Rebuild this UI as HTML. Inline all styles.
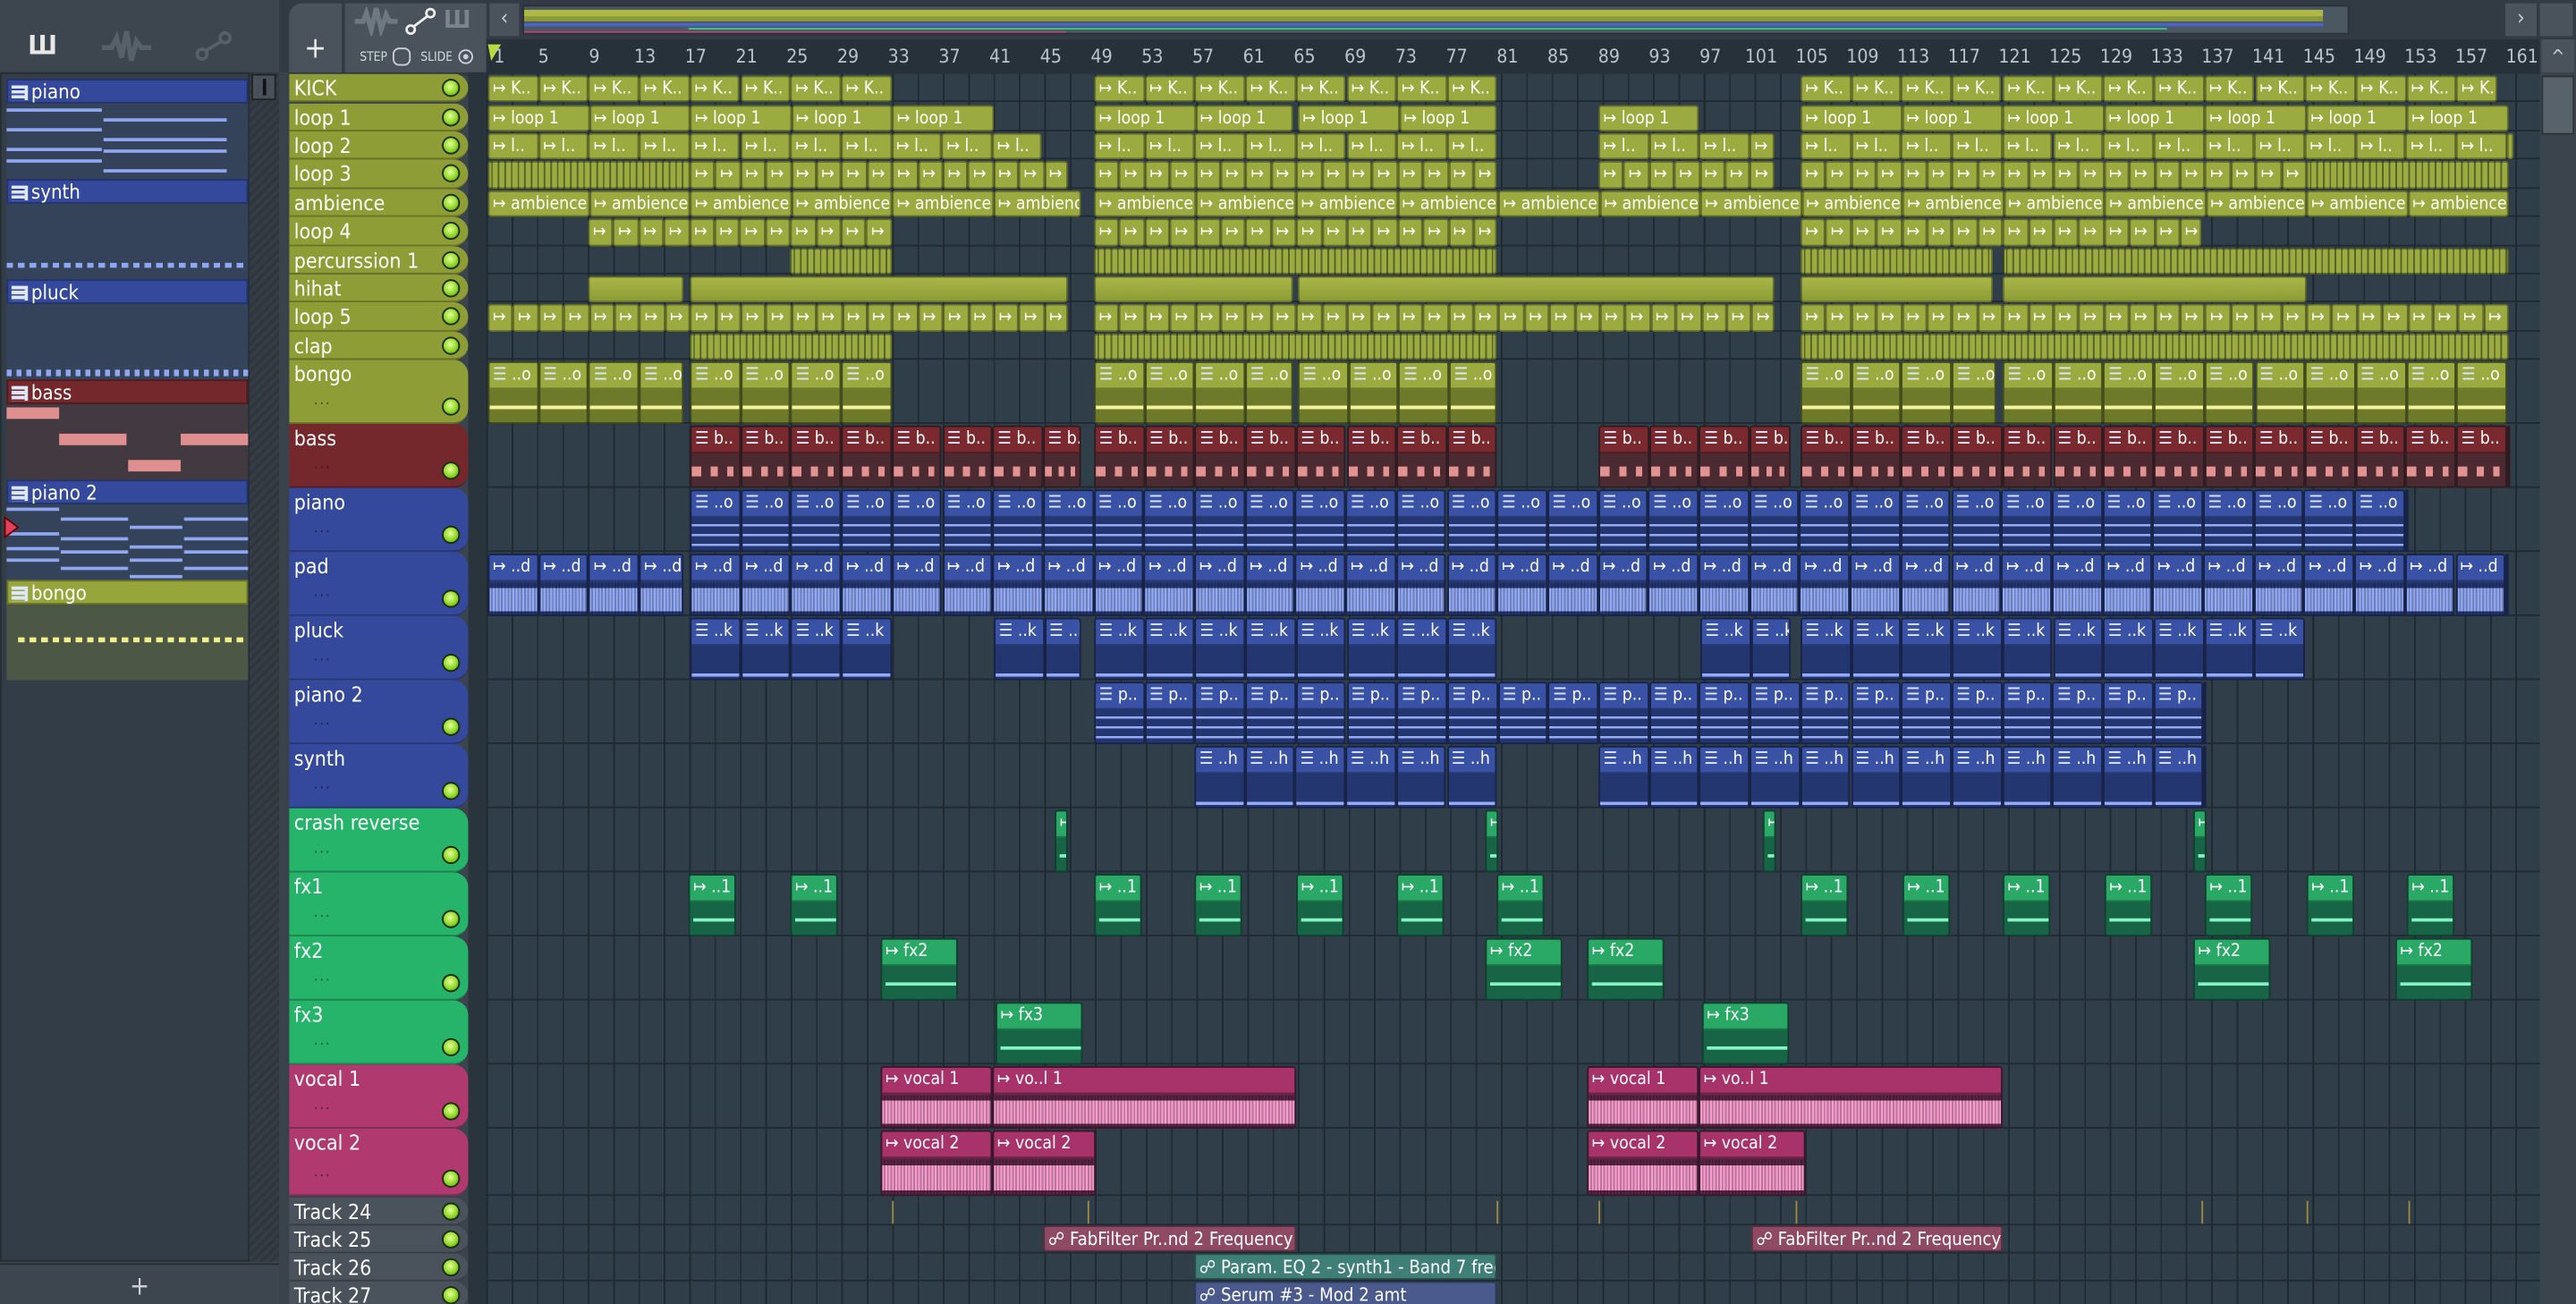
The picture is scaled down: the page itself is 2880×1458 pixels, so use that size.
<!DOCTYPE html>
<html><head><meta charset="utf-8">
<style>
*{margin:0;padding:0;box-sizing:border-box}
html,body{width:2880px;height:1458px;overflow:hidden;background:#333c45}
#s{position:absolute;left:0;top:0;width:1568px;height:794px;transform:scale(1.836735);transform-origin:0 0;font-family:"DejaVu Sans Condensed","Liberation Sans Narrow","Liberation Sans",sans-serif;color:#fff;overflow:hidden;background:#3b434c}
.a{position:absolute}
.clip{position:absolute;border:1px solid rgba(0,0,0,.35);border-radius:2px;overflow:hidden;font-size:10.5px;line-height:15px;white-space:nowrap;padding-left:2px}
.th{position:absolute;left:176px;width:109px;border-radius:0 9px 9px 0;font-size:12.5px;padding-left:3px;line-height:17px;border-bottom:1px solid rgba(0,0,0,.25)}
.led{position:absolute;right:5px;width:11px;height:11px;border-radius:50%;background:radial-gradient(circle at 45% 40%,#e8ff9a,#8fd829 55%,#4f8a10);border:1px solid #1d2a12}
.dots{position:absolute;left:15px;bottom:4px;font-size:9px;letter-spacing:1px;opacity:.5;color:#000}
.num{position:absolute;top:27px;font-size:11.5px;color:#b9c3cc;transform:translateX(-50%)}
.pat{position:absolute;left:4px;width:147px}
.ph{height:15px;font-size:12px;line-height:14px;padding-left:14px;position:relative;border:1px solid rgba(0,0,0,.3)}
.ph:before{content:"";position:absolute;left:2px;top:3px;width:8px;height:9px;background:repeating-linear-gradient(#dfe6ff 0 2px,transparent 2px 3px);border-right:2px solid #dfe6ff}
.n{position:absolute;height:2px;background:#8fa6f0}
</style></head><body><div id="s">
<div class="a" style="left:0;top:0;width:170px;height:44px;background:#3d454e"></div>
<div class="a" style="left:17px;top:18px;font-size:16px;color:#e8e8e8;font-weight:bold">Ш</div>
<svg class="a" style="left:60px;top:18px" width="36" height="22"><path d="M2 11h6l3-6 3 12 3-16 3 18 3-12 3 4h6" stroke="#556068" stroke-width="3" fill="none"/></svg>
<svg class="a" style="left:118px;top:18px" width="24" height="20"><circle cx="5" cy="15" r="3" fill="none" stroke="#556068" stroke-width="2"/><circle cx="19" cy="5" r="3" fill="none" stroke="#556068" stroke-width="2"/><path d="M7 13L17 7" stroke="#556068" stroke-width="2"/></svg>
<div class="a" style="left:0;top:44px;width:152px;height:724px;background:#333d47;border:1px solid #262e35"></div>
<div class="a" style="left:152px;top:44px;width:18px;height:724px;background:repeating-linear-gradient(135deg,#2f363d 0 2px,#363e45 2px 4px)"></div>
<div class="a" style="left:153px;top:45px;width:15px;height:16px;background:#48515a;border:1px solid #222"><div style="margin:2px auto;width:2px;height:10px;background:#111"></div></div>
<div class="a" style="left:0;top:769px;width:170px;height:25px;background:#3d454e;border-top:1px solid #262e35;text-align:center;font-size:16px;color:#ccd;line-height:26px">+</div>

<div class="pat" style="top:48px"><div class="ph" style="background:#34499b">piano</div><div style="height:46px;background:#34435a;position:relative">
<div class="n" style="left:0;width:58px;top:3px"></div><div class="n" style="left:0;width:58px;top:15px"></div><div class="n" style="left:0;width:58px;top:27px"></div><div class="n" style="left:0;width:58px;top:34px"></div>
<div class="n" style="left:59px;width:75px;top:9px"></div><div class="n" style="left:59px;width:75px;top:21px"></div><div class="n" style="left:59px;width:75px;top:28px"></div><div class="n" style="left:59px;width:75px;top:40px"></div>
<div class="n" style="left:0;width:0"></div></div></div>
<div class="a" style="left:4px;top:64px;width:147px;height:46px;overflow:hidden;pointer-events:none">
<div class="n" style="left:59px;width:57px;top:15px;background:#34435a"></div>
</div>
<div class="pat" style="top:109px"><div class="ph" style="background:#34499b">synth</div><div style="height:46px;background:#34435a;background-image:repeating-linear-gradient(90deg,#8fa6f0 0 4px,transparent 4px 7px);background-size:147px 3px;background-repeat:no-repeat;background-position:0 36px"></div></div>
<div class="pat" style="top:170px"><div class="ph" style="background:#34499b">pluck</div><div style="height:46px;background:#34435a;background-image:repeating-linear-gradient(90deg,#8fa6f0 0 3px,transparent 3px 6px);background-size:147px 4px;background-repeat:no-repeat;background-position:0 40px"></div></div>
<div class="pat" style="top:231px"><div class="ph" style="background:#74282c">bass</div><div style="height:46px;background:#433a41;background-image:linear-gradient(#df8f8f,#df8f8f),linear-gradient(#df8f8f,#df8f8f),linear-gradient(#df8f8f,#df8f8f),linear-gradient(#df8f8f,#df8f8f);background-size:32px 7px,41px 7px,41px 7px,32px 7px;background-repeat:no-repeat;background-position:0 2px,32px 18px,106px 18px,74px 34px"></div></div>
<div class="pat" style="top:292px"><div class="ph" style="background:#34499b">piano 2</div><div style="height:46px;background:#34435a;position:relative">
<div class="n" style="left:0;width:32px;top:2px"></div><div class="n" style="left:0;width:32px;top:17px"></div><div class="n" style="left:0;width:32px;top:26px"></div><div class="n" style="left:0;width:32px;top:33px"></div>
<div class="n" style="left:33px;width:41px;top:8px"></div><div class="n" style="left:33px;width:41px;top:20px"></div><div class="n" style="left:33px;width:41px;top:28px"></div><div class="n" style="left:33px;width:41px;top:38px"></div>
<div class="n" style="left:75px;width:32px;top:13px"></div><div class="n" style="left:75px;width:32px;top:25px"></div><div class="n" style="left:75px;width:32px;top:33px"></div><div class="n" style="left:75px;width:32px;top:43px"></div>
<div class="n" style="left:108px;width:39px;top:8px"></div><div class="n" style="left:108px;width:39px;top:20px"></div><div class="n" style="left:108px;width:39px;top:28px"></div><div class="n" style="left:108px;width:39px;top:38px"></div>
</div></div>
<svg class="a" style="left:2px;top:314px" width="10" height="14"><path d="M1 1L9 7L1 13Z" fill="#e0405a" stroke="#600" stroke-width="1"/></svg>
<div class="pat" style="top:353px"><div class="ph" style="background:#97a63a">bongo</div><div style="height:46px;background:#4d5746;background-image:repeating-linear-gradient(90deg,#f2f08a 0 4px,transparent 4px 7px);background-size:140px 3px;background-repeat:no-repeat;background-position:7px 20px"></div></div>

<div class="a" style="left:170px;top:0;width:1398px;height:46px;background:#323b44"></div>
<div class="a" style="left:176px;top:2px;width:32px;height:42px;background:#4a535c;border-radius:8px 0 0 0"><div style="text-align:center;font-size:18px;margin-top:17px;color:#eee">+</div></div>
<div class="a" style="left:210px;top:2px;width:86px;height:42px;background:#4a535c"></div>
<svg class="a" style="left:214px;top:4px" width="30" height="18"><path d="M2 9h5l2-5 3 10 3-13 3 13 3-9 2 4h5" stroke="#6e7880" stroke-width="3" fill="none"/></svg>
<svg class="a" style="left:246px;top:4px" width="20" height="18"><circle cx="4" cy="14" r="2.5" fill="none" stroke="#eee" stroke-width="1.5"/><circle cx="16" cy="4" r="2.5" fill="none" stroke="#eee" stroke-width="1.5"/><path d="M6 12L14 6" stroke="#eee" stroke-width="1.5"/></svg>
<div class="a" style="left:270px;top:3px;font-size:15px;font-weight:bold;color:#7a848c">Ш</div>
<div class="a" style="left:219px;top:30px;font-size:7.5px;color:#cdd">STEP</div>
<div class="a" style="left:239px;top:29px;width:11px;height:11px;border:1px solid #ccd;border-radius:4px"></div>
<div class="a" style="left:256px;top:30px;font-size:7.5px;color:#cdd">SLIDE</div>
<div class="a" style="left:279px;top:30px;width:9px;height:9px;border:1px solid #ccd;border-radius:50%;background:radial-gradient(#ccd 30%,transparent 35%)"></div>
<div class="a" style="left:298px;top:2px;width:18px;height:20px;background:#4a535c;color:#ccd;font-size:13px;text-align:center;line-height:20px">‹</div>
<div class="a" style="left:318px;top:3px;width:1112px;height:18px;background:#4b5761;border:1px solid #2a3138;background-image:linear-gradient(#aeb944,#aeb944),linear-gradient(#8a9a38,#8a9a38),linear-gradient(#4a64c8,#4a64c8),linear-gradient(#2fd08a,#2fd08a),linear-gradient(#c0407a,#c0407a);background-size:1095px 4px,1095px 3px,1095px 2px,900px 1px,330px 1px;background-repeat:no-repeat;background-position:0 2px,0 6px,0 10px,100px 13px,0 15px"></div>
<div class="a" style="left:1525px;top:2px;width:19px;height:20px;background:#4a535c;color:#ccd;font-size:13px;text-align:center;line-height:20px">›</div>
<div class="a" style="left:1546px;top:2px;width:20px;height:20px;background:#4a535c"></div>
<div class="a" style="left:296px;top:24px;width:1250px;height:21px;background:#26313a"></div>
<svg class="a" style="left:296px;top:26px" width="10" height="12"><path d="M1 1H9L3 11Z" fill="#b7dc3c"/></svg>
<div class="a" style="left:1546px;top:24px;width:22px;height:770px;background:#3b444c"></div>
<div class="a" style="left:1547px;top:24px;width:20px;height:20px;background:#4a535c;color:#ccd;font-size:11px;text-align:center;line-height:22px">^</div>
<div class="a" style="left:1547px;top:46px;width:20px;height:36px;background:#58626b;border:1px solid #2b3238"></div>

<div class="a" style="left:170px;top:44px;width:6px;height:750px;background:#3a434b"></div>
<div class="a" style="left:285px;top:44px;width:11px;height:750px;background:#2a343c"></div>
<div class="a" style="left:296px;top:45px;width:1250px;height:749px;background-color:#2f3e49;background-image:repeating-linear-gradient(90deg,#1f2a32 0 1px,transparent 1px 15.44px),repeating-linear-gradient(90deg,#1f2a32 0 1px,transparent 1px 123.5px)"></div>
</div>
<script>
var S=document.getElementById('s');
function el(h){var d=document.createElement('div');d.innerHTML=h;while(d.firstChild)S.appendChild(d.firstChild);}
var h='';for(var n=1;n<=161;n+=4){h+='<div class="num" style="left:'+(300+(n-1)*7.72+(n==1?4:0))+'px">'+n+'</div>';}el(h);
var C={O:['#8e9d35','#9cab40','#6c7a2a','#f4f29a'],B:['#34499b','#3a52a6','#243670','#93aaf6'],R:['#74282c','#7a2a2e','#4b2a32','#e39292'],G:['#25b46a','#2aa866','#176446','#84f4c4'],P:['#b03a70','#a8336a','#5a2444','#f79ccd'],Y:['#4a525b','#4a525b','#4a525b','#fff']};
var rows=[['KICK',45,17,'O'],['loop 1',62.5,17.5,'O'],['loop 2',80,17,'O'],['loop 3',97,17.5,'O'],['ambience',114.5,17.5,'O'],['loop 4',132,17.5,'O'],['percurssion 1',149.5,17.5,'O'],['hihat',167,17,'O'],['loop 5',184,17.5,'O'],['clap',201.5,17.5,'O'],['bongo',219,39,'O'],['bass',258,39,'R'],['piano',297,39,'B'],['pad',336,39,'B'],['pluck',375,39,'B'],['piano 2',414,39,'B'],['synth',453,39,'B'],['crash reverse',492,39,'G'],['fx1',531,39,'G'],['fx2',570,39,'G'],['fx3',609,39,'G'],['vocal 1',648,39,'P'],['vocal 2',687,41,'P'],['Track 24',729,17,'Y'],['Track 25',746,17,'Y'],['Track 26',763,17,'Y'],['Track 27',780,17,'Y']];
h='';rows.forEach(function(r){var c=C[r[3]];h+='<div class="th" style="top:'+r[1]+'px;height:'+r[2]+'px;background:'+c[0]+'">'+r[0]+'<div class="led" style="top:'+(r[2]>30?r[2]-16:3)+'px"></div>'+(r[2]>30?'<div class="dots">...</div>':'')+'</div>';h+='<div class="a" style="left:296px;width:1250px;top:'+(r[1]+r[2]-1)+'px;height:1px;background:#1f2a32"></div>';});el(h);
var AR='\u21A6 ';
function seg(ri,x1,x2,w,lab,kind){var r=rows[ri],c=C[r[3]],y=r[1]+1,hh=r[2]-1,o='';
 if(kind=='stripe'){o='<div class="clip" style="left:'+x1+'px;top:'+y+'px;width:'+(x2-x1)+'px;height:'+hh+'px;background:repeating-linear-gradient(90deg,'+c[1]+' 0 1px,#58652a 1px 2px,'+c[1]+' 2px 4px)"></div>';el(o);return;}
 if(kind=='solid'){o='<div class="clip" style="left:'+x1+'px;top:'+y+'px;width:'+(x2-x1)+'px;height:'+hh+'px;background:linear-gradient(#a8b648,#8d9c36)"></div>';el(o);return;}
 for(var x=x1;x<x2-1;x+=w){var ww=Math.min(w,x2-x);
  if(hh<20){o+='<div class="clip" style="left:'+x+'px;top:'+y+'px;width:'+ww+'px;height:'+hh+'px;background:'+c[1]+'">'+AR+lab+'</div>';}
  else{var body;
   if(kind=='notes')body='repeating-linear-gradient('+c[2]+' 0 3px,'+c[3]+' 3px 4.5px,'+c[2]+' 4.5px 6px)';
   else if(kind=='wave')body='repeating-linear-gradient(90deg,transparent 0 1px,rgba(0,0,0,.25) 1px 2px),linear-gradient('+c[2]+' 0 15%,'+c[3]+' 15% 85%,'+c[2]+' 85%)';
   else if(kind=='bass')body='linear-gradient(90deg,'+c[3]+' 0 20%,'+c[2]+' 20% 40%,'+c[3]+' 40% 55%,'+c[2]+' 55% 75%,'+c[3]+' 75% 88%,'+c[2]+' 88%) 0 50%/100% 6px no-repeat,'+c[2];
   else if(kind=='dots')body='linear-gradient('+c[2]+' 0 45%,'+c[3]+' 45% 55%,'+c[2]+' 55%)';
   else if(kind=='pluck')body='linear-gradient('+c[2]+' 0 80%,'+c[3]+' 80% 90%,'+c[2]+' 90%)';
   else if(kind=='hit')body='linear-gradient('+c[3]+','+c[3]+') 2px 50%/'+(ww-4)+'px 2px no-repeat,'+c[2];
   else body=c[2];
   o+='<div class="clip" style="left:'+x+'px;top:'+y+'px;width:'+ww+'px;height:'+hh+'px;padding:0;background:'+c[2]+'"><div style="height:16px;background:'+c[1]+';padding-left:2px;border-bottom:1px solid rgba(0,0,0,.3)">'+(kind=='notes'||kind=='bass'||kind=='dots'||kind=='pluck'?'<b style=\'color:#dfe6ff\'>\u2630</b> ':AR)+lab+'</div><div style="height:'+(hh-18)+'px;margin-top:1px;background:'+body+'"></div></div>';}
 }el(o);}
[[297,543],[666,911],[1096,1218],[1219,1520]].forEach(function(s){seg(0,s[0],s[1],30.7,'K..')});
[[297,420],[420,605],[666,787],[790,911],[973,1034],[1096,1527]].forEach(function(s){seg(1,s[0],s[1],61.5,'loop 1')});
[[297,634],[666,911],[973,1080],[1096,1527]].forEach(function(s){seg(2,s[0],s[1],30.7,'l..')});
seg(3,297,420,0,'','stripe');[[420,650],[666,911],[973,1080],[1096,1404]].forEach(function(s){seg(3,s[0],s[1],15.4,'')});seg(3,1404,1527,0,'','stripe');
[[297,658],[666,1527]].forEach(function(s){seg(4,s[0],s[1],61.5,'ambience')});
[[358,543],[666,911],[1096,1340]].forEach(function(s){seg(5,s[0],s[1],15.4,'')});
[[481,543],[666,911],[1096,1213],[1219,1527]].forEach(function(s){seg(6,s[0],s[1],0,'','stripe')});
[[358,416],[420,650],[666,787],[790,1080],[1096,1213],[1219,1404]].forEach(function(s){seg(7,s[0],s[1],0,'','solid')});
[[297,650],[666,1080],[1096,1527]].forEach(function(s){seg(8,s[0],s[1],15.4,'')});
[[420,543],[666,911],[1096,1527]].forEach(function(s){seg(9,s[0],s[1],0,'','stripe')});
[[297,416],[420,543],[666,787],[790,911],[1096,1215],[1219,1527]].forEach(function(s){seg(10,s[0],s[1],30.7,'..o','dots')});
[[420,658],[666,911],[973,1090],[1096,1527]].forEach(function(s){seg(11,s[0],s[1],30.7,'b..','bass')});
seg(12,420,1466,30.7,'..o','notes');
[[297,416],[420,1527]].forEach(function(s){seg(13,s[0],s[1],30.7,'..d','wave')});
[[420,543],[605,658],[666,911],[1035,1090],[1096,1404]].forEach(function(s){seg(14,s[0],s[1],30.7,'..k','pluck')});
seg(15,666,1343,30.7,'p..','notes');
[[727,911],[973,1343]].forEach(function(s){seg(16,s[0],s[1],30.7,'..h','pluck')});
[642,904,1073,1335].forEach(function(x){seg(17,x,x+8,8,'','hit')});
[419,481,666,727,789,850,911,1096,1158,1219,1281,1342,1404,1465].forEach(function(x){seg(18,x,x+29,29,'..1','hit')});
[536,904,966,1335,1458].forEach(function(x){seg(19,x,x+47,47,'fx2','hit')});
[606,1036].forEach(function(x){seg(20,x,x+53,53,'fx3','hit')});
seg(21,536,604,68,'vocal 1','wave');seg(21,604,789,185,'vo..l 1','wave');seg(21,966,1034,68,'vocal 1','wave');seg(21,1034,1219,185,'vo..l 1','wave');
seg(22,536,604,68,'vocal 2','wave');seg(22,604,667,63,'vocal 2','wave');seg(22,966,1034,68,'vocal 2','wave');seg(22,1034,1099,65,'vocal 2','wave');
function au(x,y,w,bg,t){el('<div class="clip" style="left:'+x+'px;top:'+y+'px;width:'+w+'px;height:16px;background:'+bg+';font-size:11px">\u260D '+t+'</div>');}
au(635,746,154,'#8e4a62','FabFilter Pr..nd 2 Frequency');au(1066,746,153,'#8e4a62','FabFilter Pr..nd 2 Frequency');
au(727,763,184,'#3f7f78','Param. EQ 2 - synth1 - Band 7 freq');au(727,780,184,'#4b5a8c','Serum #3 - Mod 2 amt');
[543,662,911,973,1093,1340,1404,1466].forEach(function(x){el('<div class="a" style="left:'+x+'px;top:731px;width:1px;height:14px;background:#a08a40"></div>')});
</script>
</body></html>
